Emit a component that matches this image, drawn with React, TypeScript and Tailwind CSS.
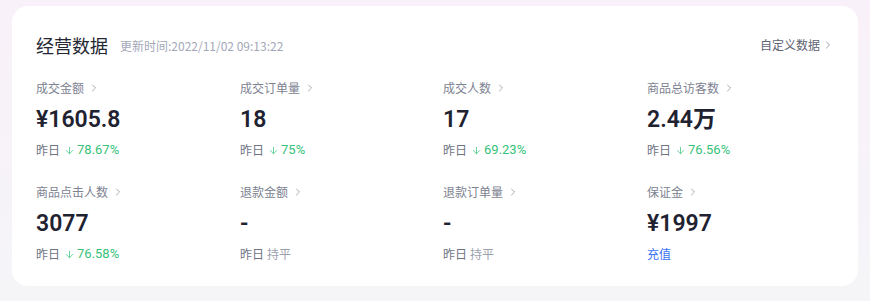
import { ArrowDown, ChevronRight } from 'lucide-react';

interface Metric {
  label: string;
  value: string;
  change?: string;
  flat?: boolean;
  action?: string;
}

const metrics: Metric[] = [
  { label: '成交金额', value: '¥1605.8', change: '78.67%' },
  { label: '成交订单量', value: '18', change: '75%' },
  { label: '成交人数', value: '17', change: '69.23%' },
  { label: '商品总访客数', value: '2.44万', change: '76.56%' },
  { label: '商品点击人数', value: '3077', change: '76.58%' },
  { label: '退款金额', value: '-', flat: true },
  { label: '退款订单量', value: '-', flat: true },
  { label: '保证金', value: '¥1997', action: '充值' },
];

const cjk = 'font-["Noto_Sans_CJK_SC",sans-serif]';
const num = 'font-["Roboto","Noto_Sans_CJK_SC",sans-serif]';

export default function App() {
  return (
    <div className={`w-[870px] h-[301px] bg-gradient-to-b from-[#f9f1f9] to-[#f5f5f8] pt-[6px] px-3 ${cjk}`}>
      <div className="w-[846px] h-[280px] bg-white rounded-2xl pt-[26px] pl-6">
        {/* Header */}
        <div className="flex items-center h-[26px] pr-6">
          <h2 className="text-[18px] leading-[26px] text-[#252733]">经营数据</h2>
          <span className="ml-3 mt-[1px] text-[12px] text-[#a3a8b8]">
            更新时间:2022/11/02 09:13:22
          </span>
          <div className="ml-auto flex items-center text-[12px] text-[#5e6272]">
            自定义数据
            <ChevronRight size={12} strokeWidth={1.5} className="ml-[2px] text-[#7e8290]" />
          </div>
        </div>

        {/* Metrics grid */}
        <div className="mt-[21px] grid grid-cols-[204px_203px_204px_1fr] gap-y-6 pr-7">
          {metrics.map((m) => (
            <div key={m.label} className="flex flex-col">
              <div className="flex items-center h-[18px] text-[12px] text-[#7d8291]">
                {m.label}
                <ChevronRight size={12} strokeWidth={1.5} className="ml-[4px] text-[#8a8f9c]" />
              </div>
              <div className={`mt-[7px] h-[32px] leading-[32px] text-[23px] font-semibold text-[#1f2230] ${num}`}>
                {m.value}
              </div>
              <div className="mt-[5px] flex items-center h-[18px] text-[12px]">
                {m.action ? (
                  <span className="text-[#3a6ff2]">{m.action}</span>
                ) : (
                  <>
                    <span className="text-[#6f7484]">昨日</span>
                    {m.flat ? (
                      <span className="ml-[3px] text-[#9ba0ad]">持平</span>
                    ) : (
                      <span className={`ml-[4px] flex items-center text-[13px] text-[#35c27a] ${num}`}>
                        <ArrowDown size={11} strokeWidth={1.6} className="mr-[2px]" />
                        {m.change}
                      </span>
                    )}
                  </>
                )}
              </div>
            </div>
          ))}
        </div>
      </div>
    </div>
  );
}
